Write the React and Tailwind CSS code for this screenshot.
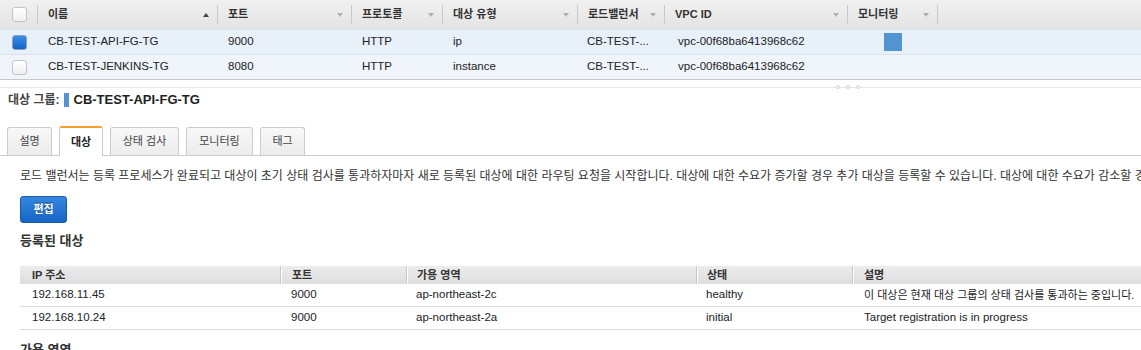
import React from "react";

const topCols =
  "grid grid-cols-[38px_180px_134px_91px_135px_87px_183px_90px_1fr]";
const botCols = "grid grid-cols-[261px_126px_290px_156px_1fr]";

const Arrow = ({ up }) =>
  up ? (
    <span className="ml-auto w-0 h-0 border-l-[3px] border-r-[3px] border-b-[4px] border-l-transparent border-r-transparent border-b-[#444]" />
  ) : (
    <span className="ml-auto w-0 h-0 border-l-[3px] border-r-[3px] border-t-[4px] border-l-transparent border-r-transparent border-t-[#b0b0b0]" />
  );

const Divider = () => <span className="ml-[8px] w-px h-[19px] bg-[#c9c9c9]" />;

const HeadCell = ({ label, up }) => (
  <div className="flex items-center pl-[10px]">
    <span className="font-bold text-[11px] text-[#333]">{label}</span>
    <Arrow up={up} />
    <Divider />
  </div>
);

const Checkbox = ({ checked }) =>
  checked ? (
    <span className="block w-[15px] h-[15px] rounded-[3px] border border-[#8a9fb8] bg-gradient-to-b from-[#3c8de6] to-[#1461c7]" />
  ) : (
    <span className="block w-[15px] h-[15px] rounded-[3px] border border-[#c4c4c4] bg-gradient-to-b from-[#ffffff] to-[#f0f0f0]" />
  );

const groups = [
  {
    name: "CB-TEST-API-FG-TG",
    port: "9000",
    type: "ip",
    selected: true,
  },
  {
    name: "CB-TEST-JENKINS-TG",
    port: "8080",
    type: "instance",
    selected: false,
  },
];

const targets = [
  {
    ip: "192.168.11.45",
    zone: "ap-northeast-2c",
    state: "healthy",
    desc: "이 대상은 현재 대상 그룹의 상태 검사를 통과하는 중입니다.",
    ko: true,
  },
  {
    ip: "192.168.10.24",
    zone: "ap-northeast-2a",
    state: "initial",
    desc: "Target registration is in progress",
    ko: false,
  },
];

const tabs = [
  { label: "설명", w: "w-[45px]" },
  { label: "대상", w: "w-[44px]", active: true },
  { label: "상태 검사", w: "w-[69px]" },
  { label: "모니터링", w: "w-[67px]" },
  { label: "태그", w: "w-[45px]" },
];

export default function App() {
  return (
    <div className="w-[1141px] h-[350px] overflow-hidden bg-white text-[#333] font-['Liberation_Sans','Noto_Sans_CJK_KR',sans-serif]">
      <div className="w-[1400px]">
        {/* target group list */}
        <div className="border-b border-[#c8c8c8]">
          <div className={`${topCols} h-[29px] bg-gradient-to-b from-[#f1f1f1] to-[#e3e3e3]`}>
            <div className="flex items-center pl-[12px]">
              <Checkbox />
              <span className="ml-auto w-px h-[19px] bg-[#c9c9c9]" />
            </div>
            <HeadCell label="이름" up />
            <HeadCell label="포트" />
            <HeadCell label="프로토콜" />
            <HeadCell label="대상 유형" />
            <HeadCell label="로드밸런서" />
            <HeadCell label="VPC ID" />
            <HeadCell label="모니터링" />
            <div />
          </div>
          {groups.map((g) => (
            <div
              key={g.name}
              className={`${topCols} h-[25px] items-center text-[11.5px] text-[#222] border-t border-[#d9e2ec] ${
                g.selected ? "bg-[#e8f0fa]" : "bg-[#f0f5fb]"
              }`}
            >
              <div className="pl-[12px]">
                <Checkbox checked={g.selected} />
              </div>
              <div className="pl-[10px]">{g.name}</div>
              <div className="pl-[10px]">{g.port}</div>
              <div className="pl-[10px]">HTTP</div>
              <div className="pl-[10px]">{g.type}</div>
              <div className="pl-[9px]">CB-TEST-...</div>
              <div className="pl-[13px]">vpc-00f68ba6413968c62</div>
              <div className="pl-[36px]">
                {g.selected && <span className="block w-[18px] h-[18px] bg-[#5294d0]" />}
              </div>
              <div />
            </div>
          ))}
        </div>

        {/* resize handle */}
        <div className="mt-[7px] border-t border-[#e6e6e6] relative">
          <div className="absolute left-[836px] -top-[3px] flex gap-[6px]">
            <span className="w-[4px] h-[4px] rounded-full border border-[#d0d0d0] bg-white" />
            <span className="w-[4px] h-[4px] rounded-full border border-[#d0d0d0] bg-white" />
            <span className="w-[4px] h-[4px] rounded-full border border-[#d0d0d0] bg-white" />
          </div>
        </div>

        {/* detail title */}
        <div className="mt-[5px] pl-[8px] flex items-center h-[14px] font-bold">
          <span className="text-[12px] text-[#444]">대상 그룹:</span>
          <span className="ml-[4px] w-[5px] h-[14px] bg-[#5294d0]" />
          <span className="ml-[5px] text-[13px] text-[#222]">CB-TEST-API-FG-TG</span>
        </div>

        {/* tabs */}
        <div className="mt-[19px] flex items-end gap-[7px] pl-[7px] h-[30px] border-b border-[#cccccc]">
          {tabs.map((t) =>
            t.active ? (
              <div
                key={t.label}
                className={`${t.w} h-[30px] -mb-px flex items-center justify-center bg-white border border-[#cccccc] border-b-0 border-t-2 border-t-[#f7a128] rounded-t-[3px] text-[11px] font-bold text-[#222]`}
              >
                {t.label}
              </div>
            ) : (
              <div
                key={t.label}
                className={`${t.w} h-[28px] flex items-center justify-center bg-gradient-to-b from-[#f8f8f8] to-[#ececec] border border-[#cccccc] border-b-0 rounded-t-[3px] text-[11px] text-[#444]`}
              >
                {t.label}
              </div>
            )
          )}
        </div>

        {/* targets tab */}
        <div className="px-[20px]">
          <p className="mt-[13px] text-[12px] leading-[15px] text-[#333] whitespace-nowrap">
            로드 밸런서는 등록 프로세스가 완료되고 대상이 초기 상태 검사를 통과하자마자 새로 등록된 대상에 대한 라우팅 요청을 시작합니다. 대상에 대한 수요가 증가할 경우 추가 대상을 등록할 수 있습니다. 대상에 대한 수요가 감소할 경우 대상을 등록 취소할 수 있습니다.
          </p>

          <button className="mt-[12px] w-[47px] h-[27px] flex items-center justify-center rounded-[3px] border border-[#1c5aa3] bg-gradient-to-b from-[#3587e0] to-[#1664c4] text-white text-[11px] font-bold [text-shadow:0_-1px_0_#0d3f80]">
            편집
          </button>

          <h3 className="mt-[10px] text-[13px] leading-[16px] font-bold text-[#333]">등록된 대상</h3>

          <div className="mt-[17px]">
            <div className={`${botCols} h-[18px] bg-gradient-to-b from-[#ececec] to-[#dedede] text-[11px] font-bold text-[#333]`}>
              <div className="pl-[12px] flex items-center border-r border-[#c8c8c8]">IP 주소</div>
              <div className="pl-[10px] flex items-center border-r border-[#c8c8c8] border-l border-l-white">포트</div>
              <div className="pl-[9px] flex items-center border-r border-[#c8c8c8] border-l border-l-white">가용 영역</div>
              <div className="pl-[9px] flex items-center border-r border-[#c8c8c8] border-l border-l-white">상태</div>
              <div className="pl-[10px] flex items-center border-l border-l-white">설명</div>
            </div>
            {targets.map((t) => (
              <div
                key={t.ip}
                className={`${botCols} h-[23px] items-center border-b border-[#dddddd] text-[11.5px] text-[#222]`}
              >
                <div className="pl-[12px]">{t.ip}</div>
                <div className="pl-[10px]">9000</div>
                <div className="pl-[9px]">{t.zone}</div>
                <div className="pl-[9px]">{t.state}</div>
                <div className={`pl-[11px] whitespace-nowrap ${t.ko ? "text-[11px]" : ""}`}>{t.desc}</div>
              </div>
            ))}
          </div>

          <h3 className="mt-[12px] text-[13px] leading-[16px] font-bold text-[#333]">가용 영역</h3>
        </div>
      </div>
    </div>
  );
}
